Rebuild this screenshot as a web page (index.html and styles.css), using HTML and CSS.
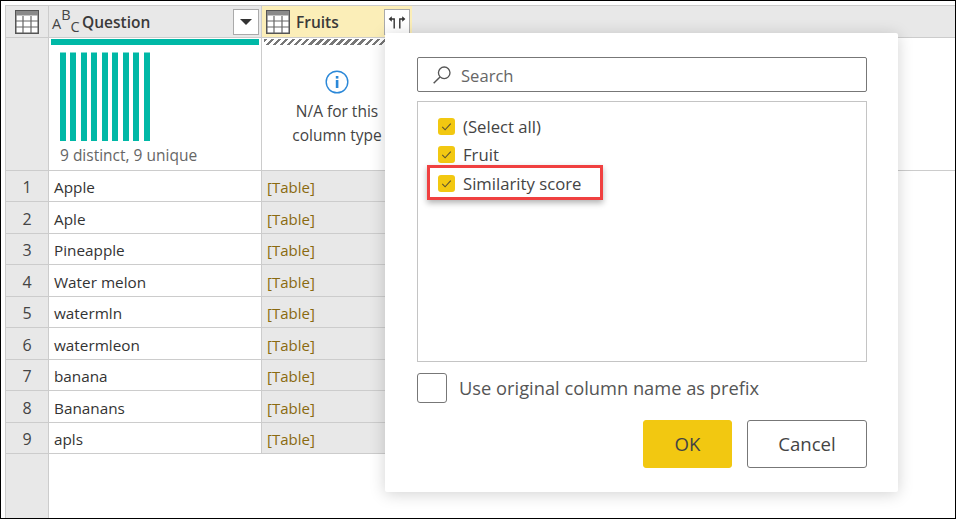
FILE: index.html
```html
<!DOCTYPE html>
<html lang="en">
<head>
<meta charset="UTF-8" />
<title>Expand column</title>
<link rel="stylesheet" href="styles.css">
</head>
<body>

<div class="frame">
  <div class="grid">
    <div class="head">
      <div class="cell-corner">
        <svg class="table-icon" viewBox="0 0 24 24"><rect x="0.75" y="0.75" width="22.5" height="22.5" fill="#fff" stroke="#555" stroke-width="1.5"/><rect x="1" y="1" width="22" height="4.5" fill="#8a8a8a"/><path d="M1 11h22M1 17h22M8 6v17M16 6v17" stroke="#666" stroke-width="1.2" fill="none"/></svg>
      </div>
      <div class="col-question head-cell">
        <span class="abc"><span class="abc-a">A</span><span class="abc-b">B</span><span class="abc-c">C</span></span>
        <span class="col-name">Question</span>
        <span class="head-btn"><span class="caret"></span></span>
      </div>
      <div class="col-fruits head-cell selected">
        <svg class="table-icon" viewBox="0 0 24 24"><rect x="0.75" y="0.75" width="22.5" height="22.5" fill="#fff" stroke="#555" stroke-width="1.5"/><rect x="1" y="1" width="22" height="4.5" fill="#8a8a8a"/><path d="M1 11h22M1 17h22M8 6v17M16 6v17" stroke="#666" stroke-width="1.2" fill="none"/></svg>
        <span class="col-name">Fruits</span>
        <span class="head-btn">
          <svg class="expand-icon" viewBox="0 0 18 14"><path d="M6.2 13.5V4H3M11.8 13.5V4H15" fill="none" stroke="#333" stroke-width="1.4"/><path d="M0.6 4L3.8 1.2v5.6zM17.4 4L14.2 1.2v5.6z" fill="#333"/></svg>
        </span>
      </div>
      <div class="head-rest"></div>
    </div>

    <div class="profile">
      <div class="side"></div>
      <div class="col-question profile-cell">
        <div class="quality teal"></div>
        <div class="bars">
          <i></i><i></i><i></i><i></i><i></i><i></i><i></i><i></i><i></i>
        </div>
        <div class="stat">9 distinct, 9 unique</div>
      </div>
      <div class="col-fruits profile-cell">
        <div class="quality hatch"></div>
        <svg class="info-icon" viewBox="0 0 24 24"><circle cx="12" cy="12" r="10.8" fill="none" stroke="#2b88d8" stroke-width="1.4"/><rect x="10.8" y="10" width="2.6" height="8" fill="#2b88d8"/><rect x="10.8" y="6" width="2.6" height="2.6" fill="#2b88d8"/></svg>
        <div class="na">N/A for this<br>column type</div>
      </div>
    </div>

    <div class="rows">
      <div class="row"><span class="num">1</span><span class="col-question val">Apple</span><span class="col-fruits link">[Table]</span></div>
      <div class="row"><span class="num">2</span><span class="col-question val">Aple</span><span class="col-fruits link">[Table]</span></div>
      <div class="row"><span class="num">3</span><span class="col-question val">Pineapple</span><span class="col-fruits link">[Table]</span></div>
      <div class="row"><span class="num">4</span><span class="col-question val">Water melon</span><span class="col-fruits link">[Table]</span></div>
      <div class="row"><span class="num">5</span><span class="col-question val">watermln</span><span class="col-fruits link">[Table]</span></div>
      <div class="row"><span class="num">6</span><span class="col-question val">watermleon</span><span class="col-fruits link">[Table]</span></div>
      <div class="row"><span class="num">7</span><span class="col-question val">banana</span><span class="col-fruits link">[Table]</span></div>
      <div class="row"><span class="num">8</span><span class="col-question val">Bananans</span><span class="col-fruits link">[Table]</span></div>
      <div class="row"><span class="num">9</span><span class="col-question val">apls</span><span class="col-fruits link">[Table]</span></div>
    </div>
    <div class="filler"><div class="side"></div></div>
  </div>

  <div class="dialog">
    <div class="search">
      <svg class="search-icon" viewBox="0 0 18 18"><circle cx="11" cy="7" r="5.2" fill="none" stroke="#555" stroke-width="1.2"/><path d="M7.2 10.8L1.5 16.5" stroke="#555" stroke-width="1.3"/></svg>
      <span class="search-text">Search</span>
    </div>
    <div class="list">
      <div class="item"><span class="check"><svg viewBox="0 0 18 18"><path d="M4.5 9.5l3 3 6-6.5" fill="none" stroke="#5c5330" stroke-width="1.2"/></svg></span>(Select all)</div>
      <div class="item"><span class="check"><svg viewBox="0 0 18 18"><path d="M4.5 9.5l3 3 6-6.5" fill="none" stroke="#5c5330" stroke-width="1.2"/></svg></span>Fruit</div>
      <div class="item"><span class="check"><svg viewBox="0 0 18 18"><path d="M4.5 9.5l3 3 6-6.5" fill="none" stroke="#5c5330" stroke-width="1.2"/></svg></span>Similarity score</div>
      <div class="highlight"></div>
    </div>
    <div class="prefix"><span class="box"></span><span class="prefix-text">Use original column name as prefix</span></div>
    <div class="actions">
      <button class="btn primary">OK</button>
      <button class="btn">Cancel</button>
    </div>
  </div>
</div>

</body>
</html>
```
FILE: styles.css
```css
* {
  box-sizing: border-box;
}
html, body {
  margin: 0;
  padding: 0;
}
body {
  width: 956px;
  height: 519px;
  overflow: hidden;
  background: #fff;
  font-family: "Open Sans", "Noto Sans", sans-serif;
  font-size: 15px;
  color: #333;
}
.frame {
  position: relative;
  width: 956px;
  height: 519px;
  border: 1px solid #000;
  padding: 4px 0 0 4px;
}
.grid {
  display: flex;
  flex-direction: column;
  height: 100%;
  border-left: 1px solid #ccc;
  border-top: 1px solid #ccc;
}

/* header */
.head {
  display: flex;
  height: 32px;
  background: #e8e8e8;
  border-bottom: 1px solid #ccc;
  flex: none;
}
.cell-corner {
  width: 43px;
  border-right: 1px solid #ccc;
  display: flex;
  align-items: center;
  justify-content: center;
}
.table-icon {
  width: 24px;
  height: 24px;
  flex: none;
}
.col-question {
  width: 213px;
  flex: none;
}
.col-fruits {
  width: 150px;
  flex: none;
}
.head-cell {
  display: flex;
  align-items: center;
  border-right: 1px solid #ccc;
  padding: 0 2px 0 3px;
}
.head-cell.selected {
  background: #fbeeb8;
  border-right: none;
  padding-left: 4px;
}
.col-name {
  font-weight: 600;
  font-size: 15.5px;
  color: #3a3a3a;
  margin-left: 3px;
  flex: 1;
}
.selected .col-name {
  margin-left: 6px;
}
.head-btn {
  width: 26px;
  height: 26px;
  background: #fff;
  border: 1px solid #aaa;
  display: flex;
  align-items: center;
  justify-content: center;
  flex: none;
}
.caret {
  width: 0;
  height: 0;
  border-left: 6px solid transparent;
  border-right: 6px solid transparent;
  border-top: 6px solid #333;
}
.expand-icon {
  width: 18px;
  height: 14px;
}
.abc {
  width: 27px;
  height: 26px;
  line-height: 11px;
  color: #444;
  font-size: 14.5px;
  display: flex;
  flex: none;
}
.abc-a {
  margin-top: 9px;
}
.abc-b {
  margin-top: 0;
}
.abc-c {
  margin-top: 12px;
}
.head-rest {
  flex: 1;
}

/* profile */
.profile {
  display: flex;
  height: 133px;
  flex: none;
  border-bottom: 1px solid #ccc;
}
.side {
  width: 43px;
  flex: none;
  background: #e8e8e8;
  border-right: 1px solid #ccc;
}
.profile-cell {
  border-right: 1px solid #ccc;
  padding: 1px 2px 0;
  display: flex;
  flex-direction: column;
}
.col-fruits.profile-cell {
  border-right: none;
  align-items: center;
}
.quality {
  height: 6px;
  flex: none;
  width: 100%;
}
.teal {
  background: #00b8a6;
}
.hatch {
  background: repeating-linear-gradient(-45deg, #777 0 2.5px, #fff 2.5px 5px);
}
.bars {
  display: flex;
  gap: 4.45px;
  margin: 7px 0 0 9px;
  height: 89px;
}
.bars i {
  width: 6px;
  background: #00b8a6;
  border-top: 1px solid #7fdcd3;
}
.stat {
  margin: 3px 0 0 9px;
  color: #666;
  font-size: 15.5px;
}
.info-icon {
  width: 24px;
  height: 24px;
  margin-top: 25px;
  flex: none;
}
.na {
  margin-top: 5px;
  text-align: center;
  line-height: 24px;
  color: #444;
  font-size: 15.5px;
}

/* data rows */
.rows {
  flex: none;
}
.row {
  display: flex;
  height: 31.45px;
  line-height: 33px;
  border-bottom: 1px solid #ccc;
  width: 406px;
}
.num {
  width: 43px;
  flex: none;
  background: #e8e8e8;
  border-right: 1px solid #ccc;
  text-align: center;
  color: #444;
  font-size: 16px;
  padding-top: 0.45px;
}
.val {
  padding-left: 5px;
  padding-top: 0.45px;
  border-right: 1px solid #ccc;
  font-size: 15.3px;
}
.link {
  background: #e8e8e8;
  padding-left: 5px;
  padding-top: 0.45px;
  color: #8a6a10;
}
.filler {
  flex: 1;
  display: flex;
}

/* dialog */
.dialog {
  position: absolute;
  left: 384px;
  top: 32px;
  width: 513px;
  height: 459px;
  background: #fff;
  border-radius: 2px;
  box-shadow: 0 2px 16px rgba(0,0,0,0.18);
  padding: 24px 31px 0 32px;
  display: flex;
  flex-direction: column;
}
.search {
  height: 35px;
  border: 1px solid #777;
  border-radius: 2px;
  display: flex;
  align-items: center;
  padding-left: 14px;
  gap: 9px;
  color: #666;
  font-size: 16.6px;
  flex: none;
}
.search-icon {
  width: 20px;
  height: 20px;
}
.search-text {
  margin-top: 2px;
}
.list {
  position: relative;
  height: 261px;
  margin-top: 9px;
  border: 1px solid #c4c4c4;
  padding-top: 10px;
  flex: none;
}
.item {
  display: flex;
  align-items: center;
  height: 28.5px;
  padding-left: 20px;
  gap: 8px;
  color: #444;
  font-size: 16.7px;
}
.check {
  width: 17px;
  height: 17px;
  background: #f2c811;
  border-radius: 3px;
  flex: none;
}
.check svg {
  display: block;
}
.highlight {
  position: absolute;
  left: 9px;
  top: 63px;
  width: 176px;
  height: 35px;
  border: 3px solid #f04040;
  box-shadow: 0 3px 6px rgba(0,0,0,0.3);
}
.prefix {
  display: flex;
  align-items: center;
  gap: 12px;
  margin-top: 11px;
  height: 30px;
  font-size: 18.3px;
  color: #555;
  flex: none;
}
.prefix-text {
  margin-bottom: 2px;
}
.box {
  width: 30px;
  height: 30px;
  border: 1px solid #777;
  border-radius: 3px;
  flex: none;
}
.actions {
  display: flex;
  justify-content: flex-end;
  gap: 15px;
  margin-top: 17px;
}
.btn {
  width: 120px;
  height: 48px;
  padding: 0 0 2px;
  background: #fff;
  border: 1px solid #777;
  border-radius: 3px;
  font-family: inherit;
  font-size: 18.6px;
  color: #444;
}
.btn.primary {
  width: 89px;
  background: #f2c811;
  border-color: #f2c811;
}
```
